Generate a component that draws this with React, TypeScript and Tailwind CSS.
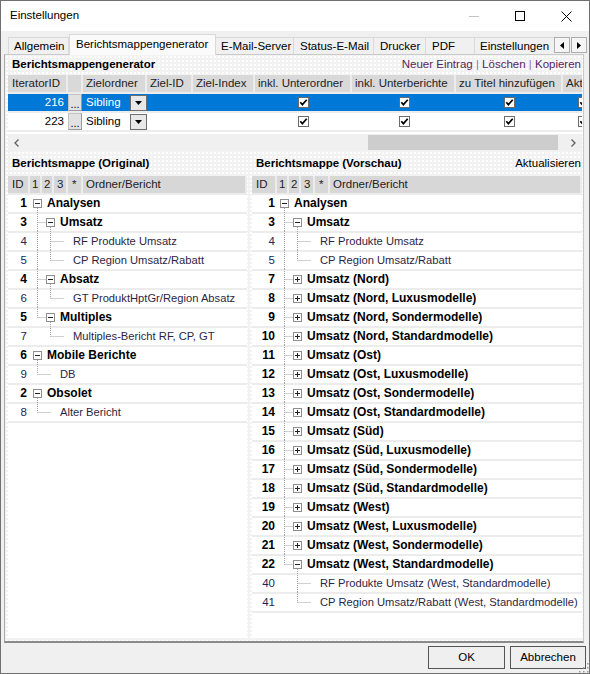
import React from 'react';

type TreeNode = { id: number; d: number; t: string; folder?: boolean; open?: boolean };

const originalTree: TreeNode[] = [
  { id: 1, d: 0, t: 'Analysen', folder: true, open: true },
  { id: 3, d: 1, t: 'Umsatz', folder: true, open: true },
  { id: 4, d: 2, t: 'RF Produkte Umsatz' },
  { id: 5, d: 2, t: 'CP Region Umsatz/Rabatt' },
  { id: 4, d: 1, t: 'Absatz', folder: true, open: true },
  { id: 6, d: 2, t: 'GT ProduktHptGr/Region Absatz' },
  { id: 5, d: 1, t: 'Multiples', folder: true, open: true },
  { id: 7, d: 2, t: 'Multiples-Bericht RF, CP, GT' },
  { id: 6, d: 0, t: 'Mobile Berichte', folder: true, open: true },
  { id: 9, d: 1, t: 'DB' },
  { id: 2, d: 0, t: 'Obsolet', folder: true, open: true },
  { id: 8, d: 1, t: 'Alter Bericht' },
];

const regions = ['Nord', 'Ost', 'Süd', 'West'];
const models = ['', ', Luxusmodelle', ', Sondermodelle', ', Standardmodelle'];

const generated: TreeNode[] = [];
regions.forEach((r, ri) =>
  models.forEach((m, mi) => {
    const id = 7 + ri * 4 + mi;
    generated.push({ id, d: 1, t: `Umsatz (${r}${m})`, folder: true, open: id === 22 });
  })
);

const previewTree: TreeNode[] = [
  { id: 1, d: 0, t: 'Analysen', folder: true, open: true },
  { id: 3, d: 1, t: 'Umsatz', folder: true, open: true },
  { id: 4, d: 2, t: 'RF Produkte Umsatz' },
  { id: 5, d: 2, t: 'CP Region Umsatz/Rabatt' },
  ...generated,
  { id: 40, d: 2, t: 'RF Produkte Umsatz (West, Standardmodelle)' },
  { id: 41, d: 2, t: 'CP Region Umsatz/Rabatt (West, Standardmodelle)' },
];

// is there another sibling below row i at depth k+1 (same parent)?
function hasNext(rows: TreeNode[], i: number, k: number) {
  for (let j = i + 1; j < rows.length; j++) {
    if (rows[j].d <= k) return false;
    if (rows[j].d === k + 1) return true;
  }
  return false;
}

const DOT = '#a3a3a3';

function Guides({ rows, i }: { rows: TreeNode[]; i: number }) {
  const n = rows[i];
  const cx = (k: number) => 7.5 + 13 * k;
  const parts: React.ReactNode[] = [];
  for (let k = 0; k < n.d; k++) {
    const nxt = hasNext(rows, i, k);
    if (k === n.d - 1) {
      parts.push(<line key={'v' + k} x1={cx(k)} y1={-2} x2={cx(k)} y2={nxt ? 17 : 8.5} stroke={DOT} strokeDasharray="1 1" />);
    } else if (nxt) {
      parts.push(<line key={'v' + k} x1={cx(k)} y1={-2} x2={cx(k)} y2={17} stroke={DOT} strokeDasharray="1 1" />);
    }
  }
  if (n.d > 0) {
    const end = n.folder ? 3 + 13 * n.d : 8 + 13 * n.d;
    parts.push(<line key="h" x1={cx(n.d - 1)} y1={8.5} x2={end} y2={8.5} stroke={DOT} strokeDasharray="1 1" />);
  }
  if (n.folder) {
    const x = 3.5 + 13 * n.d;
    parts.push(<rect key="b" x={x} y={4.5} width={8} height={8} fill="#fff" stroke="#8e8e8e" />);
    parts.push(<line key="m" x1={x + 1.5} y1={8.5} x2={x + 6.5} y2={8.5} stroke="#222" />);
    if (!n.open) parts.push(<line key="p" x1={x + 4} y1={6} x2={x + 4} y2={11} stroke="#222" />);
    if (n.open && rows[i + 1] && rows[i + 1].d > n.d) {
      parts.push(<line key="c" x1={cx(n.d)} y1={13} x2={cx(n.d)} y2={17} stroke={DOT} strokeDasharray="1 1" />);
    }
  }
  return (
    <svg width={13 * n.d + 17} height={17} className="shrink-0 overflow-visible">
      {parts}
    </svg>
  );
}

function Tree({ rows, wide }: { rows: TreeNode[]; wide?: boolean }) {
  const idCell = wide ? 'w-[25px] pr-[2px]' : 'w-[22px] pr-[3px]';
  return (
    <div className="flex flex-col h-full bg-white overflow-hidden">
      <div className="flex h-[17px] shrink-0 leading-[17px] text-[#222]">
        <div className={`${idCell} pl-[4px] bg-[#d7d7d7] border-r-2 border-[#ececec]`}>ID</div>
        <div className="w-[12px] pl-[2px] bg-[#d7d7d7] border-r-2 border-[#ececec]">1</div>
        <div className="w-[12px] pl-[2px] bg-[#d7d7d7] border-r-2 border-[#ececec]">2</div>
        <div className="w-[14px] pl-[3px] bg-[#d7d7d7] border-r-2 border-[#ececec]">3</div>
        <div className="w-[15px] pl-[4px] bg-[#d7d7d7] border-r-2 border-[#ececec]">*</div>
        <div className="flex-1 pl-[3px] bg-[#d7d7d7] border-r-2 border-[#ececec]">Ordner/Bericht</div>
      </div>
      {rows.map((n, i) => (
        <div key={i} className="flex h-[19px] shrink-0 border-t-2 border-[#ececec] leading-[17px]">
          <div className={`${idCell} text-right shrink-0 ${n.folder ? 'font-bold text-[12px] text-black' : 'text-[#1f2550]'}`}>{n.id}</div>
          <div className="flex items-center whitespace-nowrap">
            <Guides rows={rows} i={i} />
            <span className={n.folder ? 'font-bold text-[12px] text-black' : 'text-[11.2px] text-[#2d1f45]'}>{n.t}</span>
          </div>
        </div>
      ))}
      <div className="flex-1 border-t-2 border-[#ececec]" />
    </div>
  );
}

const CheckBox = () => (
  <svg width="11" height="11" viewBox="0 0 11 11" className="shrink-0">
    <rect x="0.5" y="0.5" width="10" height="10" fill="#fff" stroke="#6b6b6b" />
    <path d="M2.3 5.2 L4.4 7.6 L8.7 2.8" stroke="#000" strokeWidth="1.7" fill="none" />
  </svg>
);

function GridRow({ id, selected }: { id: number; selected?: boolean }) {
  return (
    <div className={`flex h-[17px] leading-[17px] ${selected ? 'bg-[#0078d7] text-white' : 'bg-white text-black'}`}>
      <div className="w-[60px] shrink-0 text-right pr-[4px]">{id}</div>
      <div className="w-[14px] mr-px shrink-0 bg-[#e1e1e1] border border-[#c2c2c2] border-b-[#9a9a9a] border-r-[#9a9a9a] text-black flex items-end justify-center leading-[11px] text-[11px]">...</div>
      <div className="w-[64px] shrink-0 flex items-center">
        <span className="flex-1 pl-[3px]">Sibling</span>
        <div className="w-[17px] h-[16px] border border-[#6d6d6d] bg-[#e8e8e8] flex items-center justify-center">
          <svg width="7" height="4" viewBox="0 0 7 4"><path d="M0 0 H7 L3.5 4 Z" fill="#000" /></svg>
        </div>
      </div>
      <div className="w-[46px] shrink-0" />
      <div className="w-[62px] shrink-0" />
      <div className="w-[97px] shrink-0 flex items-center justify-center"><CheckBox /></div>
      <div className="w-[104px] shrink-0 flex items-center justify-center"><CheckBox /></div>
      <div className="w-[107px] shrink-0 flex items-center justify-center"><CheckBox /></div>
      <div className="w-[40px] shrink-0 flex items-center justify-center"><CheckBox /></div>
    </div>
  );
}

export default function App() {
  return (
    <div className="w-[590px] h-[674px] border border-[#707070] bg-[#f0f0f0] flex flex-col overflow-hidden relative font-['Liberation_Sans',Arial,sans-serif] text-[11.5px] text-black">
      {/* title bar */}
      <div className="h-[30px] shrink-0 bg-white flex items-center">
        <span className="pl-[9px] text-[11.5px]">Einstellungen</span>
        <div className="ml-auto flex h-full">
          <div className="w-[46px] flex items-center justify-center">
            <svg width="10" height="10"><line x1="0" y1="5.5" x2="10" y2="5.5" stroke="#c4c4c4" /></svg>
          </div>
          <div className="w-[46px] flex items-center justify-center">
            <svg width="10" height="10"><rect x="0.5" y="0.5" width="9" height="9" fill="none" stroke="#000" /></svg>
          </div>
          <div className="w-[46px] flex items-center justify-center">
            <svg width="11" height="11"><path d="M0.5 0.5 L10.5 10.5 M10.5 0.5 L0.5 10.5" stroke="#000" /></svg>
          </div>
        </div>
      </div>

      {/* tabs */}
      <div className="h-[23px] shrink-0 flex items-end pl-[7px] relative">
        <div className="w-[61px] h-[17px] border border-b-0 border-[#d9d9d9] pl-[5px] leading-[16px]">Allgemein</div>
        <div className="w-[147px] h-[21px] -mb-px z-10 bg-[#fafafa] border border-b-0 border-[#d9d9d9] pl-[6px] leading-[18px]">Berichtsmappengenerator</div>
        <div className="w-[78px] h-[17px] border border-b-0 border-l-0 border-[#d9d9d9] pl-[5px] leading-[16px]">E-Mail-Server</div>
        <div className="w-[80px] h-[17px] border border-b-0 border-l-0 border-[#d9d9d9] pl-[6px] leading-[16px]">Status-E-Mail</div>
        <div className="w-[52px] h-[17px] border border-b-0 border-l-0 border-[#d9d9d9] pl-[6px] leading-[16px]">Drucker</div>
        <div className="w-[49px] h-[17px] border border-b-0 border-l-0 border-[#d9d9d9] pl-[6px] leading-[16px]">PDF</div>
        <div className="w-[90px] h-[17px] border border-b-0 border-l-0 border-[#d9d9d9] pl-[5px] leading-[16px] whitespace-nowrap">Einstellungen</div>
        <div className="absolute right-[2px] bottom-[1px] flex gap-px">
          <div className="w-[16px] h-[16px] border border-[#adadad] bg-[#f5f5f5] flex items-center justify-center">
            <svg width="4" height="7"><path d="M4 0 V7 L0 3.5 Z" fill="#000" /></svg>
          </div>
          <div className="w-[16px] h-[16px] border border-[#adadad] bg-[#f5f5f5] flex items-center justify-center">
            <svg width="4" height="7"><path d="M0 0 V7 L4 3.5 Z" fill="#000" /></svg>
          </div>
        </div>
      </div>

      {/* tab page */}
      <div className="ml-[3px] w-[580px] h-[589px] shrink-0 border border-[#c9c9c9] border-l-[#a8a8a8] border-b-2 border-b-[#8a8a8a] bg-[#f2f2f2] [background-image:radial-gradient(#ffffff_0.8px,transparent_0.8px)] [background-size:4px_4px] flex flex-col pl-[3px] pr-[1px] pb-[3px]">
        <div className="h-[20px] shrink-0 flex items-center justify-between pl-[4px] pr-[1px]">
          <span className="font-bold">Berichtsmappengenerator</span>
          <span className="text-[#5a1f5a]">
            Neuer Eintrag <span className="text-[#8a7a8a]">|</span> Löschen <span className="text-[#8a7a8a]">|</span> Kopieren
          </span>
        </div>

        {/* grid */}
        <div className="w-[574px] shrink-0 overflow-hidden bg-white flex flex-col">
          <div className="flex h-[17px] leading-[17px] text-[#222] whitespace-nowrap">
            <div className="w-[60px] shrink-0 pl-[4px] bg-[#d9d9d9] border-r-2 border-[#ececec]">IteratorID</div>
            <div className="w-[15px] shrink-0 bg-[#d9d9d9] border-r-2 border-[#ececec]" />
            <div className="w-[64px] shrink-0 pl-[3px] bg-[#d9d9d9] border-r-2 border-[#ececec]">Zielordner</div>
            <div className="w-[46px] shrink-0 pl-[3px] bg-[#d9d9d9] border-r-2 border-[#ececec]">Ziel-ID</div>
            <div className="w-[62px] shrink-0 pl-[3px] bg-[#d9d9d9] border-r-2 border-[#ececec]">Ziel-Index</div>
            <div className="w-[97px] shrink-0 pl-[3px] bg-[#d9d9d9] border-r-2 border-[#ececec]">inkl. Unterordner</div>
            <div className="w-[104px] shrink-0 pl-[3px] bg-[#d9d9d9] border-r-2 border-[#ececec]">inkl. Unterberichte</div>
            <div className="w-[107px] shrink-0 pl-[3px] bg-[#d9d9d9] border-r-2 border-[#ececec]">zu Titel hinzufügen</div>
            <div className="w-[40px] shrink-0 pl-[3px] bg-[#d9d9d9]">Aktiv</div>
          </div>
          <div className="h-[2px] bg-[#ececec]" />
          <GridRow id={216} selected />
          <div className="h-[2px] bg-[#ececec]" />
          <GridRow id={223} />
          <div className="h-[2px] bg-[#ececec]" />
          <div className="h-[2px] bg-white" />
          <div className="h-[17px] bg-[#f0f0f0] flex items-center">
            <div className="w-[17px] flex justify-center">
              <svg width="5" height="8"><path d="M4.5 0.5 L1 4 L4.5 7.5" stroke="#606060" strokeWidth="1.3" fill="none" /></svg>
            </div>
            <div className="w-[343px]" />
            <div className="w-[190px] h-[15px] bg-[#cdcdcd]" />
            <div className="flex-1" />
            <div className="w-[17px] flex justify-center">
              <svg width="5" height="8"><path d="M0.5 0.5 L4 4 L0.5 7.5" stroke="#606060" strokeWidth="1.3" fill="none" /></svg>
            </div>
          </div>
        </div>

        <div className="h-[25px] shrink-0 flex items-center">
          <div className="w-[239px] pl-[4px] font-bold">Berichtsmappe (Original)</div>
          <div className="ml-[5px] flex-1 flex justify-between pl-[4px] pr-[1px]">
            <span className="font-bold">Berichtsmappe (Vorschau)</span>
            <span>Aktualisieren</span>
          </div>
        </div>

        <div className="flex-1 flex gap-[5px] min-h-0">
          <div className="w-[239px] shrink-0">
            <Tree rows={originalTree} />
          </div>
          <div className="flex-1">
            <Tree rows={previewTree} wide />
          </div>
        </div>
      </div>

      {/* buttons */}
      <div className="flex-1 flex justify-end items-start pt-[3px] pr-[3px] gap-[5px]">
        <button className="w-[77px] h-[23px] border border-[#555] bg-[#efefef]">OK</button>
        <button className="w-[76px] h-[23px] border border-[#555] bg-[#efefef]">Abbrechen</button>
      </div>
      <svg width="12" height="12" className="absolute right-0 bottom-0">
        {[[10, 2], [10, 6], [6, 6], [10, 10], [6, 10], [2, 10]].map(([x, y], i) => (
          <rect key={i} x={x} y={y} width="1.5" height="1.5" fill="#9a9a9a" />
        ))}
      </svg>
    </div>
  );
}
